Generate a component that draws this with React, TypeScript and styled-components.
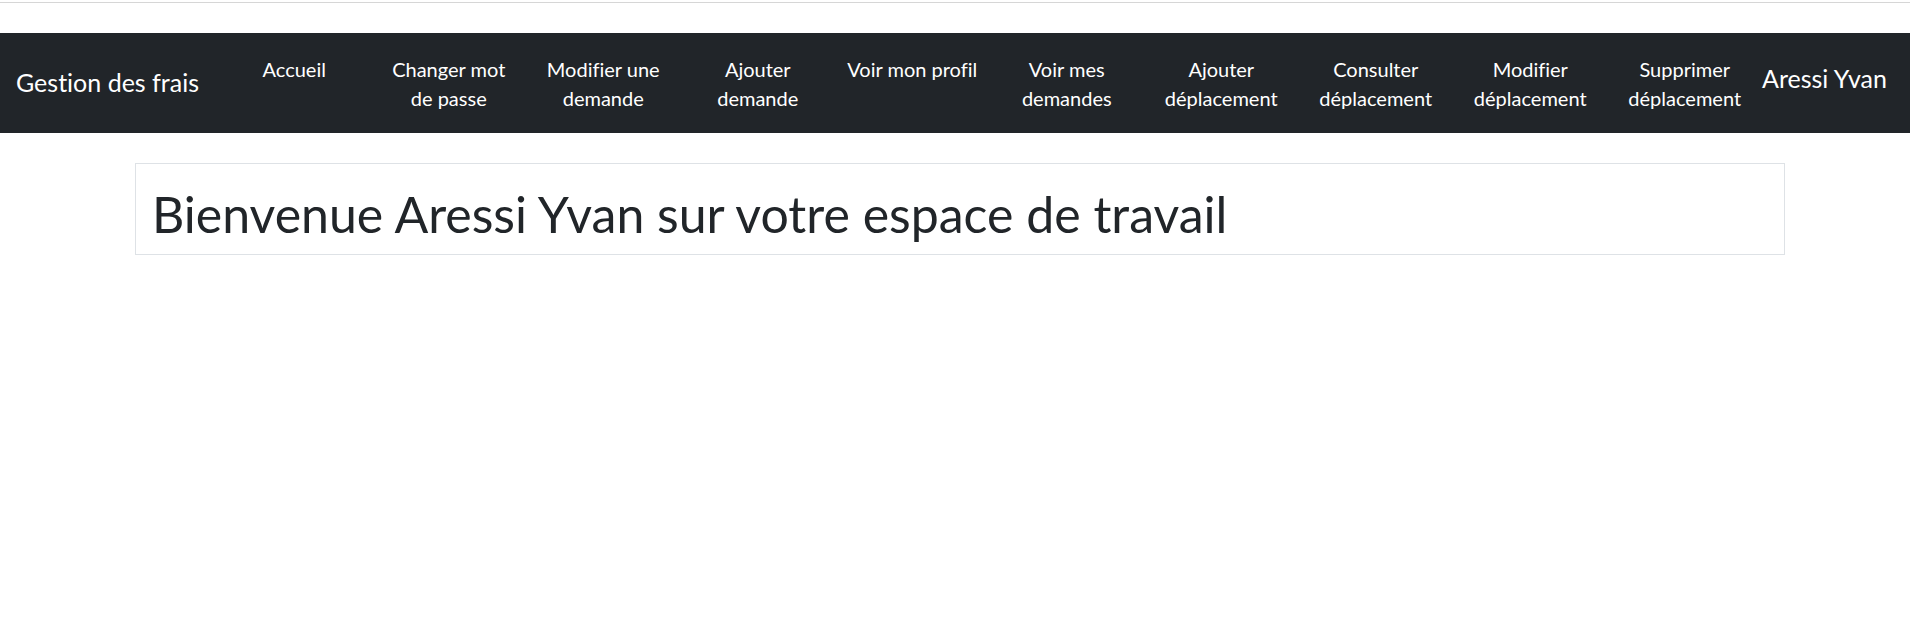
import React from "react";
import styled, { createGlobalStyle } from "styled-components";

const GlobalStyle = createGlobalStyle`
  html, body { margin: 0; padding: 0; background: #fff; }
  body {
    font-family: Lato, "Open Sans", Arial, sans-serif;
    color: #212529;
    font-variant-ligatures: none;
    font-feature-settings: "liga" 0, "clig" 0, "dlig" 0;
  }
  * { box-sizing: border-box; }
`;

const Page = styled.div`
  padding-top: 2px;
`;

const TopRule = styled.div`
  height: 1px;
  background: #d6d6d6;
  margin-bottom: 30px;
`;

const NavBar = styled.nav`
  display: flex;
  align-items: center;
  height: 100px;
  background: #212529;
  padding-left: 16px;
`;

const Brand = styled.a`
  flex: 0 0 auto;
  width: 181px;
  margin-right: 20px;
  font-size: 25px;
  line-height: 1.5;
  color: #fff;
  white-space: nowrap;
`;

const NavList = styled.ul`
  display: flex;
  align-self: stretch;
  align-items: flex-start;
  margin: 0;
  padding: 22px 0 0;
  list-style: none;
`;

const NavItem = styled.li`
  flex: 0 0 154.5px;
  padding: 0 10px;
  text-align: center;
  font-size: 20px;
  line-height: 29px;
  color: #fff;
`;

const UserName = styled.span`
  flex: 0 0 auto;
  padding-bottom: 8px;
  font-size: 25px;
  line-height: 1.5;
  color: #fff;
  white-space: nowrap;
`;

const Card = styled.div`
  width: 1650px;
  margin: 30px 0 0 135px;
  border: 1px solid #dee2e6;
  padding: 20px 16px 10px;
`;

const Title = styled.h1`
  margin: 0;
  font-size: 50px;
  font-weight: 400;
  line-height: 60px;
  color: #212529;
`;

const links = [
  "Accueil",
  "Changer mot de passe",
  "Modifier une demande",
  "Ajouter demande",
  "Voir mon profil",
  "Voir mes demandes",
  "Ajouter déplacement",
  "Consulter déplacement",
  "Modifier déplacement",
  "Supprimer déplacement",
];

export default function App() {
  return (
    <Page>
      <GlobalStyle />
      <TopRule />
      <NavBar>
        <Brand>Gestion des frais</Brand>
        <NavList>
          {links.map((l) => (
            <NavItem key={l}>{l}</NavItem>
          ))}
        </NavList>
        <UserName>Aressi Yvan</UserName>
      </NavBar>
      <Card>
        <Title>Bienvenue Aressi Yvan sur votre espace de travail</Title>
      </Card>
    </Page>
  );
}
